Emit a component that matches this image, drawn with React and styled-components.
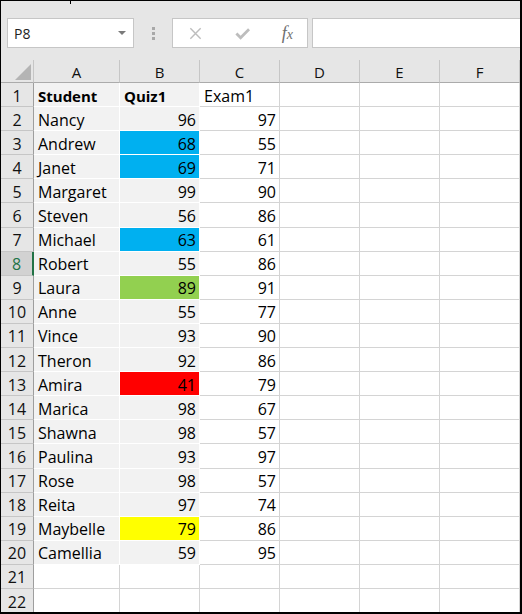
import React from 'react';
import styled, { createGlobalStyle } from 'styled-components';

const GlobalStyle = createGlobalStyle`
  html, body {
    margin: 0;
    padding: 0;
    background: #ffffff;
  }
  * {
    box-sizing: border-box;
  }
`;

const FONT = `"Open Sans", "Noto Sans", "Liberation Sans", sans-serif`;

const ROWS = [
  ['Nancy', 96, 97],
  ['Andrew', 68, 55, 'blue'],
  ['Janet', 69, 71, 'blue'],
  ['Margaret', 99, 90],
  ['Steven', 56, 86],
  ['Michael', 63, 61, 'blue'],
  ['Robert', 55, 86],
  ['Laura', 89, 91, 'green'],
  ['Anne', 55, 77],
  ['Vince', 93, 90],
  ['Theron', 92, 86],
  ['Amira', 41, 79, 'red'],
  ['Marica', 98, 67],
  ['Shawna', 98, 57],
  ['Paulina', 93, 97],
  ['Rose', 98, 57],
  ['Reita', 97, 74],
  ['Maybelle', 79, 86, 'yellow'],
  ['Camellia', 59, 95],
];

const FILLS = {
  gray: '#f2f2f2',
  blue: '#00b0f0',
  green: '#92d050',
  red: '#ff0000',
  yellow: '#ffff00',
};

const COLUMNS = ['A', 'B', 'C', 'D', 'E', 'F'];
const SELECTED_ROW = 8;

function App() {
  const body = [
    { head: 1, cells: [{ text: 'Student', bold: true, fill: 'gray' }, { text: 'Quiz1', bold: true, fill: 'gray' }, { text: 'Exam1' }] },
    ...ROWS.map(([name, quiz, exam, color], i) => ({
      head: i + 2,
      cells: [
        { text: name, fill: 'gray' },
        { text: quiz, num: true, fill: color || 'gray' },
        { text: exam, num: true },
      ],
    })),
    { head: 21, cells: [] },
    { head: 22, cells: [] },
  ];

  return (
    <>
      <GlobalStyle />
      <Frame>
        <Toolbar>
          <NameBox>
            <span>P8</span>
            <Caret />
          </NameBox>
          <Grip>
            <i /><i /><i />
          </Grip>
          <FormulaButtons>
            <ToolIcon viewBox="0 0 16 16">
              <path d="M2.5 2.5 L13.5 13.5 M13.5 2.5 L2.5 13.5" stroke="#bdbdbd" strokeWidth="1.5" fill="none" />
            </ToolIcon>
            <ToolIcon viewBox="0 0 16 16">
              <path d="M1.5 8 L6 12.5 L15 3.5" stroke="#bdbdbd" strokeWidth="3" fill="none" />
            </ToolIcon>
            <Fx>
              f<sub>x</sub>
            </Fx>
          </FormulaButtons>
          <FormulaInput />
        </Toolbar>

        <Sheet>
          <Corner>
            <Triangle />
          </Corner>
          {COLUMNS.map((c) => (
            <ColHead key={c}>{c}</ColHead>
          ))}

          {body.map((row) => (
            <React.Fragment key={row.head}>
              <RowHead $selected={row.head === SELECTED_ROW}>{row.head}</RowHead>
              {COLUMNS.map((c, ci) => {
                const cell = row.cells[ci];
                if (!cell) return <Cell key={c} />;
                return (
                  <Cell key={c} $fill={cell.fill} $bold={cell.bold} $num={cell.num}>
                    {cell.text}
                  </Cell>
                );
              })}
            </React.Fragment>
          ))}
        </Sheet>
      </Frame>
    </>
  );
}

export default App;

const Frame = styled.div`
  width: 522px;
  height: 614px;
  border-style: solid;
  border-color: #000;
  border-width: 1px 2px 2px 1px;
  overflow: hidden;
  display: flex;
  flex-direction: column;
  font-family: ${FONT};
  background: #e6e6e6;
  position: relative;

  &::before {
    content: '';
    position: absolute;
    top: 0;
    left: 69px;
    width: 1px;
    height: 3px;
    background: #000;
  }
`;

const Toolbar = styled.div`
  height: 59px;
  flex: none;
  display: flex;
  align-items: flex-start;
  padding: 17px 0 0 6px;
`;

const NameBox = styled.div`
  width: 127px;
  height: 30px;
  background: #fff;
  border: 1px solid #c6c6c6;
  display: flex;
  align-items: center;
  justify-content: space-between;
  padding: 0 7px 0 6px;
  font-size: 14px;
  color: #222;
`;

const Caret = styled.span`
  width: 0;
  height: 0;
  border-left: 4px solid transparent;
  border-right: 4px solid transparent;
  border-top: 4px solid #7a7a7a;
`;

const Grip = styled.div`
  width: 38px;
  height: 30px;
  display: flex;
  flex-direction: column;
  align-items: center;
  justify-content: center;
  gap: 2px;

  i {
    display: block;
    width: 3px;
    height: 3px;
    background: #a8a8a8;
  }
`;

const FormulaButtons = styled.div`
  width: 136px;
  height: 30px;
  background: #fff;
  border: 1px solid #c6c6c6;
  display: flex;
  align-items: center;
  justify-content: space-between;
  padding: 0 14px 0 15px;
`;

const ToolIcon = styled.svg`
  width: 15px;
  height: 15px;
`;

const Fx = styled.span`
  font-family: "Liberation Serif", "DejaVu Serif", serif;
  font-style: italic;
  font-size: 18px;
  color: #6e6e6e;
  line-height: 1;

  sub {
    font-size: 14px;
    vertical-align: baseline;
  }
`;

const FormulaInput = styled.div`
  flex: 1;
  height: 30px;
  margin-left: 4px;
  background: #fff;
  border: 1px solid #c6c6c6;
  border-right: none;
`;

const Sheet = styled.div`
  flex: 1;
  display: grid;
  grid-template-columns: 33px 86px 80px 80px 80px 80px 1fr;
  grid-template-rows: 23px;
  grid-auto-rows: 24.1px;
  background: #fff;
  align-content: start;
`;

const Corner = styled.div`
  background: #e6e6e6;
  border-right: 1px solid #c6c6c6;
  border-bottom: 1px solid #ababab;
  position: relative;
`;

const Triangle = styled.div`
  position: absolute;
  right: 2px;
  bottom: 2px;
  width: 0;
  height: 0;
  border-left: 16px solid transparent;
  border-bottom: 16px solid #b4b4b4;
`;

const ColHead = styled.div`
  background: #e6e6e6;
  border-right: 1px solid #c6c6c6;
  border-bottom: 1px solid #ababab;
  display: flex;
  align-items: center;
  justify-content: center;
  font-size: 15px;
  color: #111;
  padding-top: 1px;
`;

const RowHead = styled.div`
  background: ${(p) => (p.$selected ? '#d2d2d2' : '#e6e6e6')};
  color: ${(p) => (p.$selected ? '#217346' : '#111')};
  border-bottom: 1px solid #c6c6c6;
  border-right: ${(p) => (p.$selected ? '2px solid #217346' : '1px solid #9e9e9e')};
  display: flex;
  align-items: center;
  justify-content: center;
  padding-top: 2px;
  font-size: 16px;
`;

const Cell = styled.div`
  background: ${(p) => (p.$fill ? FILLS[p.$fill] : '#fff')};
  border-right: 1px solid ${(p) => (p.$fill ? '#fff' : '#d4d4d4')};
  border-bottom: 1px solid ${(p) => (p.$fill ? '#fff' : '#d4d4d4')};
  display: flex;
  align-items: center;
  justify-content: ${(p) => (p.$num ? 'flex-end' : 'flex-start')};
  padding: 2px 3px 0 4px;
  font-size: ${(p) => (p.$bold ? '15px' : '16px')};
  font-weight: ${(p) => (p.$bold ? 700 : 400)};
  color: #000;
  white-space: nowrap;
  overflow: hidden;
`;
